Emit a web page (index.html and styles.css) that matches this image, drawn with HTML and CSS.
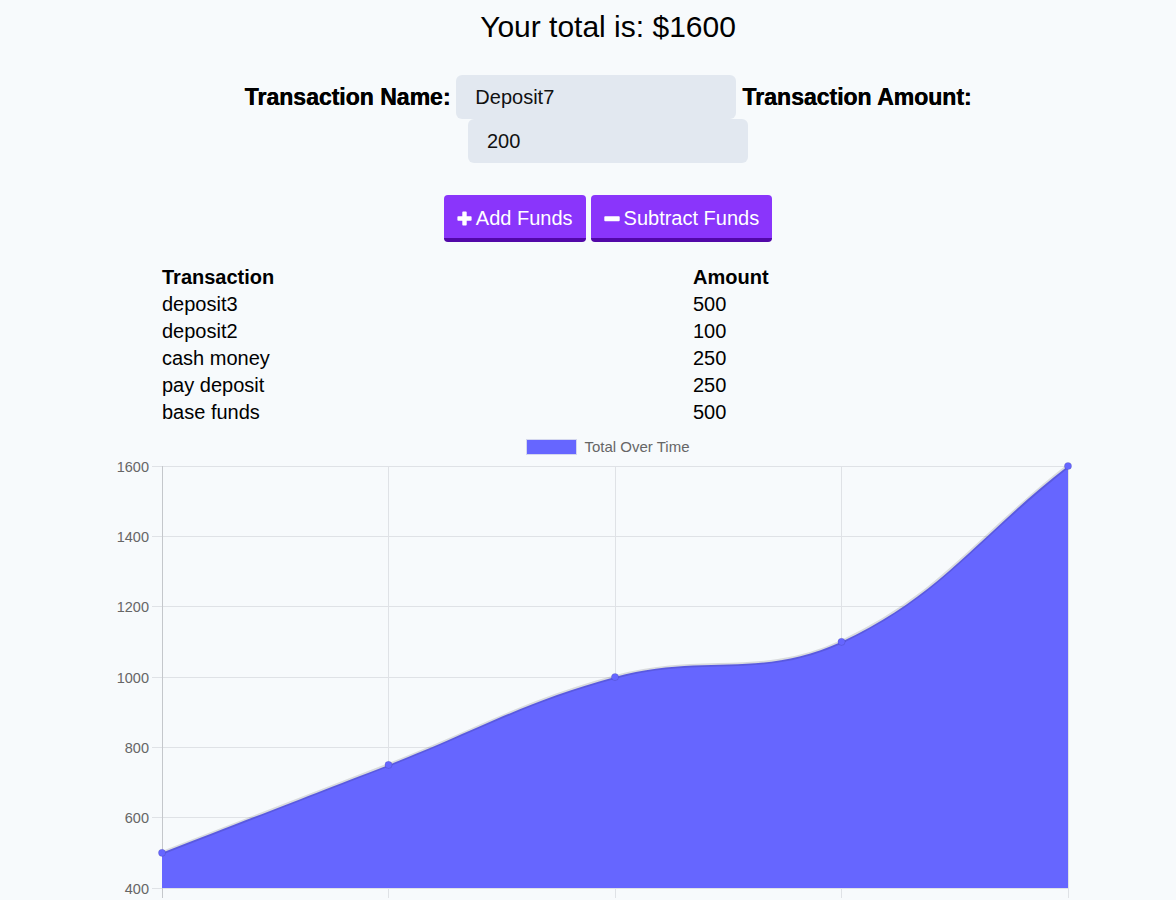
FILE: index.html
```html
<!DOCTYPE html>
<html lang="en">
<head>
<meta charset="utf-8">
<title>Budget Tracker</title>
<link rel="stylesheet" href="styles.css">
</head>
<body>
<main class="app">
  <h1 class="total">Your total is: $1600</h1>

  <form class="entry">
    <label class="entry-label" for="t-name">Transaction Name:</label>
    <input class="entry-input" id="t-name" type="text" value="Deposit7">
    <label class="entry-label" for="t-amount">Transaction Amount:</label>
    <input class="entry-input" id="t-amount" type="number" value="200">
  </form>

  <div class="actions">
    <button class="btn" type="button">
      <svg class="btn-icon" width="15" height="15" viewBox="0 0 15 15" aria-hidden="true"><path d="M5.3 1.2a.8.8 0 0 1 .8-.8h2.8a.8.8 0 0 1 .8.8v4.1h4.1a.8.8 0 0 1 .8.8v2.8a.8.8 0 0 1-.8.8H9.7v4.1a.8.8 0 0 1-.8.8H6.1a.8.8 0 0 1-.8-.8V9.7H1.2a.8.8 0 0 1-.8-.8V6.1a.8.8 0 0 1 .8-.8h4.1z" fill="#fff"/></svg>
      <span>Add Funds</span>
    </button>
    <button class="btn" type="button">
      <svg class="btn-icon" width="16" height="15" viewBox="0 0 16 15" aria-hidden="true"><rect x="0.3" y="5.2" width="15.4" height="5" rx="0.9" fill="#fff"/></svg>
      <span>Subtract Funds</span>
    </button>
  </div>

  <table class="ledger">
    <thead>
      <tr><th class="col-name">Transaction</th><th>Amount</th></tr>
    </thead>
    <tbody>
      <tr><td>deposit3</td><td>500</td></tr>
      <tr><td>deposit2</td><td>100</td></tr>
      <tr><td>cash money</td><td>250</td></tr>
      <tr><td>pay deposit</td><td>250</td></tr>
      <tr><td>base funds</td><td>500</td></tr>
    </tbody>
  </table>

  <section class="chart">
    <div class="legend">
      <span class="legend-box"></span>
      <span class="legend-text">Total Over Time</span>
    </div>
    <svg class="plot" width="1000" height="440" viewBox="0 0 1000 440">
      <g class="grid">
        <line x1="44" y1="8.5" x2="960.5" y2="8.5"/>
        <line x1="44" y1="78.5" x2="960.5" y2="78.5"/>
        <line x1="44" y1="148.5" x2="960.5" y2="148.5"/>
        <line x1="44" y1="219.5" x2="960.5" y2="219.5"/>
        <line x1="44" y1="289.5" x2="960.5" y2="289.5"/>
        <line x1="44" y1="359.5" x2="960.5" y2="359.5"/>
        <line x1="44" y1="430.5" x2="960.5" y2="430.5"/>
        <line x1="280.5" y1="8" x2="280.5" y2="440"/>
        <line x1="507.5" y1="8" x2="507.5" y2="440"/>
        <line x1="733.5" y1="8" x2="733.5" y2="440"/>
        <line x1="960.5" y1="8" x2="960.5" y2="440"/>
      </g>
      <line class="axis" x1="54.5" y1="8" x2="54.5" y2="440"/>
      <g class="ticks">
        <text x="41" y="8.5">1600</text>
        <text x="41" y="78.5">1400</text>
        <text x="41" y="148.5">1200</text>
        <text x="41" y="219.5">1000</text>
        <text x="41" y="289.5">800</text>
        <text x="41" y="359.5">600</text>
        <text x="41" y="430.5">400</text>
      </g>
      <path class="area" d="M54 394.8 C144.6 359.6 189.9 342.1 280.5 306.9 C371.1 271.7 413.8 244.3 507 219 C595 195.1 653 221.3 733.5 183.8 C834.2 136.9 869.4 78.3 960 8 L960 430 L54 430 Z"/>
      <path class="line" d="M54 394.8 C144.6 359.6 189.9 342.1 280.5 306.9 C371.1 271.7 413.8 244.3 507 219 C595 195.1 653 221.3 733.5 183.8 C834.2 136.9 869.4 78.3 960 8"/>
      <g class="points">
        <circle cx="54" cy="394.8" r="3.6"/>
        <circle cx="280.5" cy="306.9" r="3.6"/>
        <circle cx="507" cy="219" r="3.6"/>
        <circle cx="733.5" cy="183.8" r="3.6"/>
        <circle cx="960" cy="8" r="3.6"/>
      </g>
    </svg>
  </section>
</main>
</body>
</html>
```

FILE: styles.css
```css
html, body {
  margin: 0;
  padding: 0;
}

body {
  background: #f7fafc;
  color: #000;
  font-family: "Liberation Sans", Arial, sans-serif;
  height: 900px;
  overflow: hidden;
}

.app {
  width: 1000px;
  margin: 0 auto;
  padding-left: 40px;
}

.total {
  margin: 10px 0 0;
  font-size: 30px;
  line-height: 34px;
  font-weight: normal;
  text-align: center;
}

.entry {
  margin: 31px 0 0;
  display: flex;
  flex-wrap: wrap;
  justify-content: center;
  align-items: center;
  column-gap: 6px;
  row-gap: 0;
}

.entry-label {
  font-size: 23px;
  font-weight: bold;
  text-shadow: 0.5px 0 0 #000;
}

.entry-input {
  box-sizing: border-box;
  width: 280px;
  height: 44px;
  padding: 0 0 0 19px;
  border: none;
  border-radius: 6px;
  background: #e2e8f0;
  color: #111;
  font-family: "Liberation Sans", Arial, sans-serif;
  font-size: 20px;
  outline: none;
  -moz-appearance: textfield;
}

.entry-input::-webkit-outer-spin-button,
.entry-input::-webkit-inner-spin-button {
  -webkit-appearance: none;
  margin: 0;
}

.actions {
  margin-top: 32px;
  display: flex;
  justify-content: center;
  gap: 5px;
}

.btn {
  display: flex;
  align-items: center;
  gap: 4px;
  box-sizing: border-box;
  height: 47px;
  padding: 3px 13px 0;
  border: none;
  border-bottom: 4px solid #5208a8;
  border-radius: 4px;
  background: #8a35fb;
  color: #fff;
  font-family: "Liberation Sans", Arial, sans-serif;
  font-size: 20px;
  line-height: 23px;
  cursor: pointer;
}

.btn-icon {
  display: block;
  flex: none;
}

.ledger {
  width: 898px;
  margin: 21px auto 0;
  font-size: 20px;
  border-spacing: 2px;
}

.ledger th,
.ledger td {
  padding: 1px;
  text-align: left;
  line-height: 23px;
}

.ledger .col-name {
  width: 527px;
}

.chart {
  margin-top: 0;
}

.legend {
  box-sizing: border-box;
  display: flex;
  justify-content: center;
  align-items: center;
  gap: 7px;
  height: 31px;
  padding-top: 8px;
}

.legend-box {
  box-sizing: border-box;
  width: 51px;
  height: 16px;
  background: #6666ff;
  border: 1.5px solid #d4d7ee;
}

.legend-text {
  color: #666;
  font-size: 15px;
}

.plot {
  display: block;
}

.grid line {
  stroke: #dfe2e6;
  stroke-width: 1;
}

.axis {
  stroke: #c4c7cb;
  stroke-width: 1;
}

.ticks text {
  fill: #666;
  font-family: "Liberation Sans", Arial, sans-serif;
  font-size: 14.5px;
  text-anchor: end;
  dominant-baseline: central;
}

.area {
  fill: #6666ff;
}

.line {
  fill: none;
  stroke: rgba(0, 0, 0, 0.12);
  stroke-width: 3.5;
}

.points circle {
  fill: #6666ff;
  stroke: rgba(0, 0, 0, 0.1);
  stroke-width: 1;
}
```
